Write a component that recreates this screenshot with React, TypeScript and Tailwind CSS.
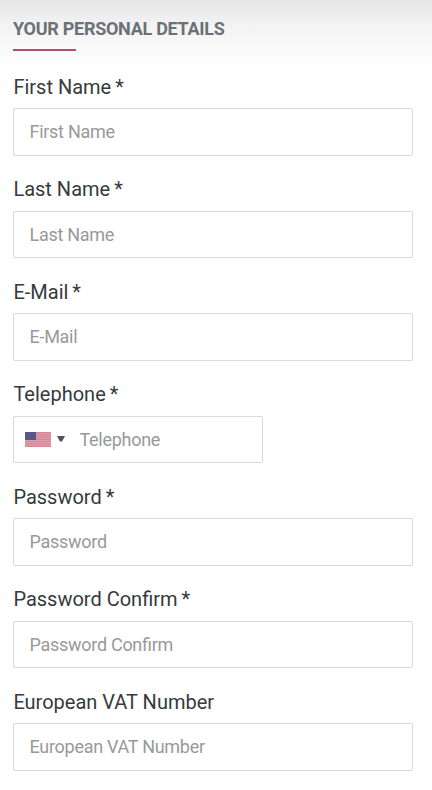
type FieldProps = { label: string; placeholder: string; required?: boolean; phone?: boolean };

function Flag() {
  return (
    <svg width="26" height="15" viewBox="0 0 26 15" className="shrink-0">
      <rect width="26" height="15" fill="#e0a0ad" />
      {[0, 1, 2, 3, 4, 5, 6].map((i) => (
        <rect key={i} y={i * 2.31} width="26" height="1.15" fill="#d58594" />
      ))}
      <rect width="11" height="8" fill="#59578a" />
    </svg>
  );
}

function Field({ label, placeholder, required, phone }: FieldProps) {
  return (
    <div className="flex h-[102.5px] flex-col">
      <label className="-mt-[0.2px] h-[33.2px] pl-[0.4px] text-[20px] leading-[24px] text-[#363a3c]">
        {label}
        {required && <span className="-ml-px"> *</span>}
      </label>
      <div className={"flex h-[47.5px] items-center rounded-[2px] border border-[#d8d9da] bg-white " + (phone ? "w-[250px] pl-[10.5px]" : "w-[400px] pl-[15.5px]")}>
        {phone && (
          <div className="flex w-[55px] shrink-0 items-center">
            <Flag />
            <svg width="8" height="6" viewBox="0 0 8 6" className="ml-[6.5px]"><path d="M0 0h8L5 5.5H3z" fill="#505355" /></svg>
          </div>
        )}
        <input type="text" placeholder={placeholder} className="h-[26px] w-full min-w-0 bg-transparent pb-[0.4px] text-[18px] tracking-[-0.28px] text-[#333] outline-none [font-feature-settings:'liga'_1] placeholder:text-[#999]" />
      </div>
    </div>
  );
}

export default function App() {
  return (
    <main className="h-[790px] w-[432px] overflow-hidden bg-white bg-linear-to-b from-[#e6e6e6] via-[#f4f4f4] via-40% to-white bg-[length:100%_70px] bg-no-repeat pl-[13px] font-[Roboto,sans-serif]">
      <h2 className="h-[49px] pt-[18px] text-[18px] leading-[22px] font-bold tracking-[-0.28px] text-[#6b7175]">YOUR PERSONAL DETAILS</h2>
      <div className="mb-[24px] h-[2px] w-[63px] bg-[#b04f69]" />
      <Field label="First Name" placeholder="First Name" required />
      <Field label="Last Name" placeholder="Last Name" required />
      <Field label="E-Mail" placeholder="E-Mail" required />
      <Field label="Telephone" placeholder="Telephone" required phone />
      <Field label="Password" placeholder="Password" required />
      <Field label="Password Confirm" placeholder="Password Confirm" required />
      <Field label="European VAT Number" placeholder="European VAT Number" />
    </main>
  );
}
